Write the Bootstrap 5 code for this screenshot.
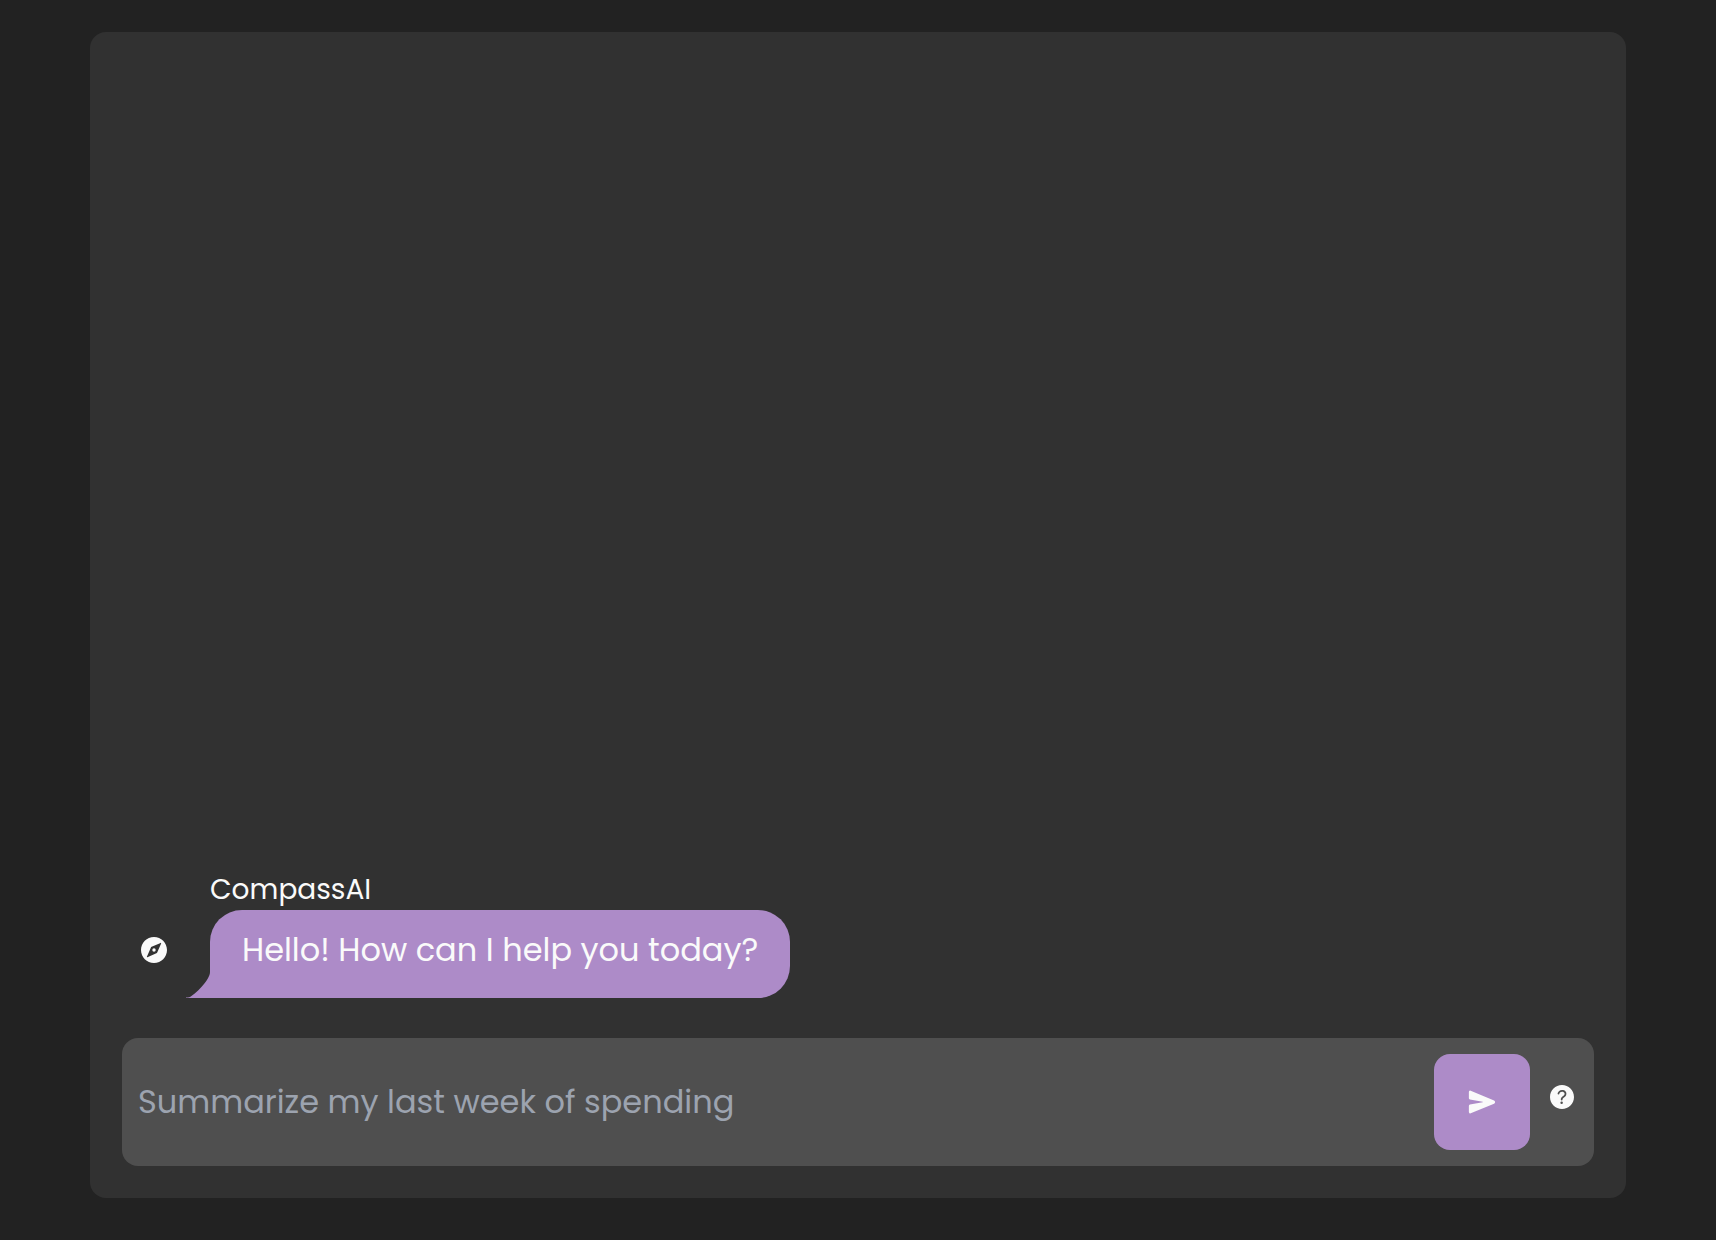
<!DOCTYPE html>
<html lang="en">
<head>
<meta charset="utf-8">
<meta name="viewport" content="width=device-width, initial-scale=1">
<title>CompassAI</title>
<link href="https://cdn.jsdelivr.net/npm/bootstrap@5.3.0/dist/css/bootstrap.min.css" rel="stylesheet">
<style>
  body { background: #222222; color: #fafafa; font-family: Poppins, Inter, "Open Sans", sans-serif; }
  .page-shell { padding: 32px 16px 42px; }
  .chat-panel { max-width: 1536px; background: #313131; border-radius: 16px; padding: 32px; }
  .chat-log { padding: 0 16px 40px; }
  .chat-name { font-size: 28px; line-height: 40px; }
  .chat-line { column-gap: 40px; }
  .chat-avatar { padding-bottom: 8px; }
  .chat-bubble { background: #ad8bc8; border-radius: 32px 32px 32px 0; padding: 16px 32px 24px; font-size: 32px; line-height: 48px; }
  .chat-tail { position: absolute; left: -24px; bottom: 0; }
  .name-row { padding-left: 72px; }
  .composer { background: #4f4f4f; border-radius: 16px; padding: 16px; }
  .composer-input, .composer-input:focus { background: transparent; border: 0; box-shadow: none; color: #fafafa; padding: 0; font-size: 32px; line-height: 48px; }
  .composer-input::placeholder { color: #9ca3af; opacity: 1; }
  .send-btn, .send-btn:hover { width: 96px; height: 96px; border: 0; border-radius: 16px; background: #ad8bc8; color: #fafafa; }
  .help-btn, .help-btn:hover { color: #fafafa; border: 0; padding: 0 0 10px; line-height: 1; }
</style>
</head>
<body>
<main class="page-shell min-vh-100 d-flex">
  <section class="chat-panel w-100 mx-auto d-flex flex-column">
    <div class="chat-log flex-grow-1 d-flex flex-column justify-content-end">
      <div class="name-row"><div class="chat-name">CompassAI</div></div>
      <div class="chat-line d-flex align-items-center">
        <div class="chat-avatar d-flex flex-shrink-0">
          <svg width="32" height="32" viewBox="0 0 512 512" fill="currentColor" fill-rule="evenodd" aria-hidden="true">
            <path d="M256 48C141 48 48 141 48 256s93 208 208 208 208-93 208-208S371 48 256 48zM370 150L307 294a26 26 0 0 1-13 13L150 370c-6 2-10-3-8-8L205 218a26 26 0 0 1 13-13L362 142c6-2 10 3 8 8z"/>
            <circle cx="256" cy="256" r="27"/>
          </svg>
        </div>
        <div class="chat-bubble position-relative">
          <svg class="chat-tail" width="25" height="26" viewBox="0 0 25 26" fill="#ad8bc8" aria-hidden="true"><path d="M25 0H24C24 7 12 20 4 25Q2 25.500 0 25.500V26H25z"/></svg>
          Hello! How can I help you today?
        </div>
      </div>
    </div>
    <form class="composer d-flex align-items-center gap-3">
      <input class="composer-input form-control flex-grow-1" type="text" aria-label="Message" placeholder="Summarize my last week of spending">
      <button class="send-btn btn d-flex flex-shrink-0 align-items-center justify-content-center" type="button" aria-label="Send">
        <svg width="28" height="28" viewBox="0 0 512 512" fill="currentColor" aria-hidden="true"><path d="m476.590 227.050-.16-.07L49.350 49.840A23.560 23.560 0 0 0 27.140 52 24.650 24.650 0 0 0 16 72.590v113.290a24 24 0 0 0 19.520 23.570l232.930 43.070a4 4 0 0 1 0 7.860L35.530 303.450A24 24 0 0 0 16 327v113.310A23.570 23.570 0 0 0 26.590 460a23.940 23.940 0 0 0 13.220 4 24.550 24.550 0 0 0 9.520-1.930L476.400 285.940l.19-.09a32 32 0 0 0 0-58.800z"/></svg>
      </button>
      <button class="help-btn btn d-flex flex-shrink-0" type="button" aria-label="Help">
        <svg width="32" height="32" viewBox="0 0 512 512" fill="currentColor" aria-hidden="true"><path d="M256 64C150 64 64 150 64 256s86 192 192 192 192-86 192-192S362 64 256 64zm-6 304a20 20 0 1 1 20-20 20 20 0 0 1-20 20zm33.440-102C267.230 276.880 265 286.850 265 296a14 14 0 0 1-28 0c0-21.910 10.080-39.330 30.820-53.260C287.100 229.800 298 221.600 298 203.570c0-12.260-7-21.570-21.490-28.460-3.410-1.620-11-3.200-20.340-3.090-11.720.15-20.820 2.950-27.830 8.590C215.120 191.250 214 202.830 214 203a14 14 0 1 1-28-1.350c.11-2.430 1.800-24.320 24.770-42.800 11.910-9.580 27.060-14.560 45-14.780 12.700-.15 24.630 2 32.720 5.820C312.700 161.340 326 180.430 326 203.570c0 33.830-22.610 49.020-42.560 62.430z"/></svg>
      </button>
    </form>
  </section>
</main>
<script src="https://cdn.jsdelivr.net/npm/bootstrap@5.3.0/dist/js/bootstrap.bundle.min.js"></script>
</body>
</html>
